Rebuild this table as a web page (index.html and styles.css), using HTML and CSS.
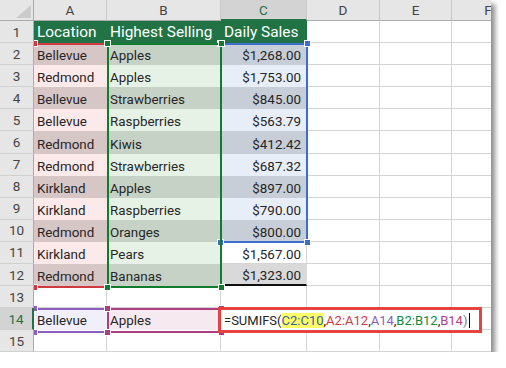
FILE: index.html
```html
<!DOCTYPE html>
<html>
<head>
<meta charset="utf-8">
<link rel="stylesheet" href="styles.css">
</head>
<body>
<div class="sheet">
  <div class="grid">
    <div class="corner"><span class="tri"></span></div>
    <div class="ch">A</div><div class="ch">B</div><div class="ch sel">C</div><div class="ch">D</div><div class="ch">E</div><div class="ch">F</div>

    <div class="rh">1</div><div class="c th">Location</div><div class="c th">Highest Selling</div><div class="c th">Daily Sales</div><div class="c"></div><div class="c"></div><div class="c"></div>
    <div class="rh">2</div><div class="c a-d">Bellevue</div><div class="c b-d">Apples</div><div class="c num c-d">$1,268.00</div><div class="c"></div><div class="c"></div><div class="c"></div>
    <div class="rh">3</div><div class="c a-l">Redmond</div><div class="c b-l">Apples</div><div class="c num c-l">$1,753.00</div><div class="c"></div><div class="c"></div><div class="c"></div>
    <div class="rh">4</div><div class="c a-d">Bellevue</div><div class="c b-d">Strawberries</div><div class="c num c-d">$845.00</div><div class="c"></div><div class="c"></div><div class="c"></div>
    <div class="rh">5</div><div class="c a-l">Bellevue</div><div class="c b-l">Raspberries</div><div class="c num c-l">$563.79</div><div class="c"></div><div class="c"></div><div class="c"></div>
    <div class="rh">6</div><div class="c a-d">Redmond</div><div class="c b-d">Kiwis</div><div class="c num c-d">$412.42</div><div class="c"></div><div class="c"></div><div class="c"></div>
    <div class="rh">7</div><div class="c a-l">Redmond</div><div class="c b-l">Strawberries</div><div class="c num c-l">$687.32</div><div class="c"></div><div class="c"></div><div class="c"></div>
    <div class="rh">8</div><div class="c a-d">Kirkland</div><div class="c b-d">Apples</div><div class="c num c-d">$897.00</div><div class="c"></div><div class="c"></div><div class="c"></div>
    <div class="rh">9</div><div class="c a-l">Kirkland</div><div class="c b-l">Raspberries</div><div class="c num c-l">$790.00</div><div class="c"></div><div class="c"></div><div class="c"></div>
    <div class="rh">10</div><div class="c a-d">Redmond</div><div class="c b-d">Oranges</div><div class="c num c-d">$800.00</div><div class="c"></div><div class="c"></div><div class="c"></div>
    <div class="rh">11</div><div class="c a-l">Kirkland</div><div class="c b-l">Pears</div><div class="c num">$1,567.00</div><div class="c"></div><div class="c"></div><div class="c"></div>
    <div class="rh">12</div><div class="c a-d">Redmond</div><div class="c b-d">Bananas</div><div class="c num c-g">$1,323.00</div><div class="c"></div><div class="c"></div><div class="c"></div>
    <div class="rh">13</div><div class="c"></div><div class="c"></div><div class="c"></div><div class="c"></div><div class="c"></div><div class="c"></div>
    <div class="rh sel">14</div><div class="c p">Bellevue</div><div class="c m">Apples</div><div class="c"></div><div class="c"></div><div class="c"></div><div class="c"></div>
    <div class="rh">15</div><div class="c"></div><div class="c"></div><div class="c"></div><div class="c"></div><div class="c"></div><div class="c"></div>
  </div>

  <div class="overlay">
    <div class="range r-blue"><i class="h tl"></i><i class="h tr"></i><i class="h bl"></i><i class="h br"></i></div>
    <div class="range r-red"><i class="h tl"></i><i class="h bl"></i></div>
    <div class="range r-green"><i class="h tl"></i><i class="h tr"></i><i class="h bl"></i><i class="h br"></i></div>
    <div class="range r-purple"><i class="h tl"></i><i class="h bl"></i></div>
    <div class="range r-mag"><i class="h tl"></i><i class="h tr"></i><i class="h bl"></i><i class="h br"></i></div>
    <div class="edit"><span class="k">=SUMIFS(</span><span class="f-blue">C2:C10</span><span class="k">,</span><span class="f-red">A2:A12</span><span class="k">,</span><span class="f-purple">A14</span><span class="k">,</span><span class="f-green">B2:B12</span><span class="k">,</span><span class="f-mag">B14</span><span class="f-par">)</span><span class="caret"></span></div>
  </div>
</div>
</body>
</html>
```
FILE: styles.css
```css
body {
  margin: 0;
  background: #ffffff;
}

.sheet {
  position: relative;
  width: 491px;
  height: 352px;
  overflow: hidden;
  background: #ffffff;
  box-shadow: 4px 4px 5px rgba(0, 0, 0, 0.45);
  font-family: Roboto, "Noto Sans", sans-serif;
}

.grid {
  display: grid;
  grid-template-columns: 34px 73px 114px 86px 73px 72px 73px;
  grid-template-rows: 21px repeat(15, 22.1px);
}

.corner {
  background: #e6e6e6;
  border-right: 1px solid #ababab;
  border-bottom: 1px solid #ababab;
  display: flex;
  justify-content: flex-end;
  align-items: flex-end;
  padding: 0 2px 2px 0;
}

.tri {
  width: 15px;
  height: 13px;
  background: #cbcbcb;
  clip-path: polygon(100% 0, 100% 100%, 0 100%);
}

.ch {
  background: #e6e6e6;
  border-right: 1px solid #c9c9c9;
  border-bottom: 1px solid #ababab;
  color: #444;
  font-size: 13.5px;
  display: flex;
  align-items: center;
  justify-content: center;
}

.ch.sel {
  background: #d3d3d3;
  color: #217346;
  border-bottom: 2px solid #217346;
}

.rh {
  background: #e6e6e6;
  border-right: 1px solid #ababab;
  border-bottom: 1px solid #d0d0d0;
  color: #444;
  font-size: 13.5px;
  display: flex;
  align-items: center;
  justify-content: center;
}

.rh.sel {
  background: #d3d3d3;
  color: #217346;
  border-right: 2px solid #217346;
}

.c {
  border-right: 1px solid #d4d4d4;
  border-bottom: 1px solid #d4d4d4;
  font-size: 13.4px;
  color: #262626;
  display: flex;
  align-items: flex-end;
  padding: 0 3px 1px;
  white-space: nowrap;
  overflow: hidden;
}

.c.num {
  justify-content: flex-end;
  padding-right: 5px;
}

.th {
  background: #217346;
  color: #ffffff;
  font-size: 15.4px;
  border-color: transparent;
}

.a-d { background: #d7c6c6; border-color: transparent; }
.a-l { background: #fce9e9; border-color: transparent; }
.b-d { background: #c6d2c6; border-color: transparent; }
.b-l { background: #e6f2e6; border-color: transparent; }
.c-d { background: #c8ced8; border-color: transparent; }
.c-l { background: #e8eef8; border-color: transparent; }
.c-g { background: #d9d9d9; border-color: transparent; border-bottom: 2px solid #111; }
.p { background: #f1eff9; border-color: transparent; }
.m { background: #f7e9f0; border-color: transparent; }

/* range highlight overlays */
.overlay {
  position: absolute;
  left: 34px;
  top: 21px;
  right: 0;
  bottom: 0;
  overflow: hidden;
}

.range {
  position: absolute;
  box-sizing: border-box;
  border: 2px solid;
}

.h {
  position: absolute;
  width: 5px;
  height: 5px;
  border: 1px solid #ffffff;
  background: currentColor;
}
.h.tl { left: -5px; top: -5px; }
.h.tr { right: -5px; top: -5px; }
.h.bl { left: -5px; bottom: -5px; }
.h.br { right: -5px; bottom: -5px; }

.r-red {
  color: #d0393f;
  border-left: 0;
  border-right: 0;
  left: 0;
  top: 22px;
  width: 74px;
  height: 245px;
}
.r-red .h.tl, .r-red .h.bl { left: -3px; }

.r-green {
  color: #107c2e;
  left: 73px;
  top: 22px;
  width: 115px;
  height: 245px;
}

.r-blue {
  color: #3c6fcb;
  left: 186px;
  top: 22px;
  width: 88px;
  height: 200px;
}

.r-purple {
  color: #8a5fbd;
  border-left: 0;
  left: 0;
  top: 287px;
  width: 75px;
  height: 25px;
}
.r-purple .h.tl, .r-purple .h.bl { left: -3px; }

.r-mag {
  color: #ad3f80;
  left: 73px;
  top: 287px;
  width: 115px;
  height: 25px;
}

.edit {
  position: absolute;
  box-sizing: border-box;
  left: 184px;
  top: 286px;
  width: 264px;
  height: 26px;
  border: 3px solid #e5433f;
  background: #ffffff;
  display: flex;
  align-items: center;
  padding-left: 3px;
  font-size: 13px;
  color: #262626;
  white-space: nowrap;
}

.k { color: #262626; }
.f-blue { color: #3560a8; background: #ffff66; }
.f-red { color: #d33a45; }
.f-purple { color: #8a5fbd; }
.f-green { color: #138a3c; }
.f-mag { color: #b0418a; }
.f-par { color: #777777; }

.caret {
  width: 1px;
  height: 15px;
  background: #000000;
  margin-left: 2px;
}
```
